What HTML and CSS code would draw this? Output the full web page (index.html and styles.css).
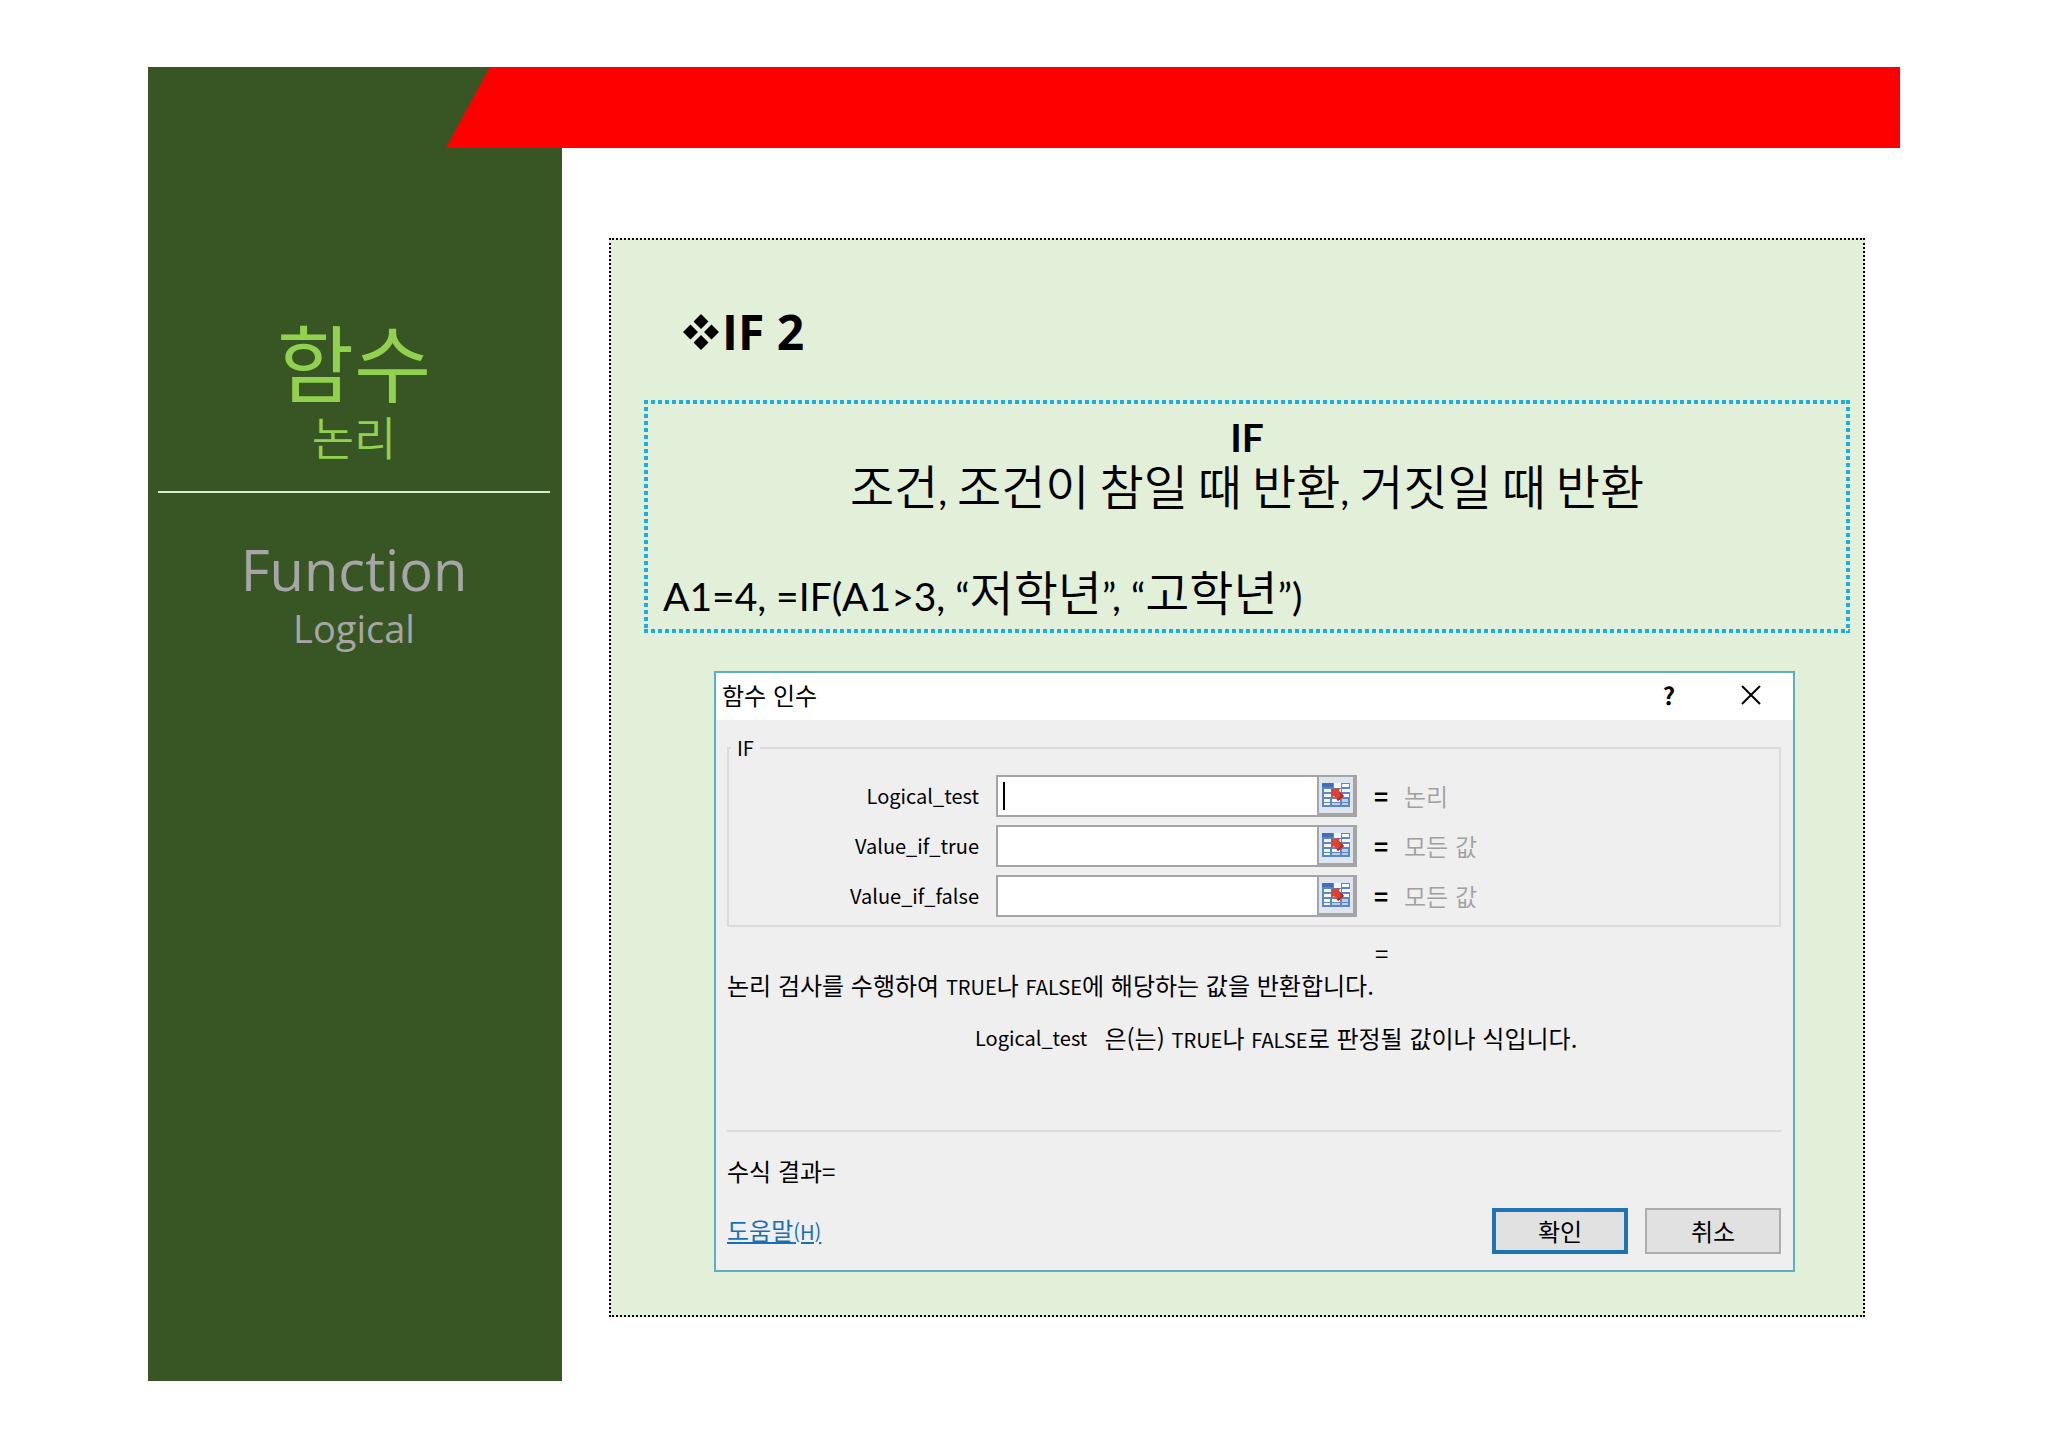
FILE: index.html
```html
<!DOCTYPE html>
<html lang="ko">
<head>
  <meta charset="utf-8">
  <title>함수 - 논리 - IF 2</title>
  <link rel="stylesheet" href="styles.css">
</head>
<body>
<svg class="sprite" width="0" height="0" aria-hidden="true">
  <symbol id="icon-range" viewBox="0 0 28 24">
    <rect x="0" y="0" width="28" height="24" fill="#5d86c2"/>
    <rect x="0" y="0" width="11" height="4" fill="#3f6fb5"/>
    <g fill="#f4f9ff">
      <rect x="12" y="0" width="7" height="5"/>
      <rect x="20" y="1" width="7" height="3"/>
      <rect x="2" y="6" width="7" height="3"/>
      <rect x="10" y="6" width="9" height="3"/>
      <rect x="20" y="6" width="8" height="3"/>
      <rect x="2" y="11" width="7" height="3"/>
      <rect x="10" y="11" width="9" height="3"/>
      <rect x="21" y="11" width="6" height="3"/>
      <rect x="2" y="16" width="6" height="3"/>
      <rect x="10" y="16" width="8" height="3"/>
      <rect x="2" y="20" width="6" height="2"/>
    </g>
    <g fill="#b9cdf0">
      <rect x="20" y="16" width="6" height="3"/>
      <rect x="10" y="20" width="8" height="2"/>
      <rect x="20" y="20" width="6" height="2"/>
    </g>
    <path d="M9 6 L18 5 L17 8 L22 13 L16 18 L12 13 L9 15 Z" fill="#dc4332"/>
    <path d="M17 8 L22 13 L16 18 L15 16 L19 13 Z" fill="#b02a20"/>
  </symbol>
</svg>

<div class="slide">
  <aside class="sidebar">
    <h1 class="title-ko">함수</h1>
    <p class="subtitle-ko">논리</p>
    <hr class="sidebar-line">
    <p class="title-en">Function</p>
    <p class="subtitle-en">Logical</p>
  </aside>
  <div class="ribbon"></div>

  <main class="content">
    <section class="panel">
      <h2 class="panel-title">
        <svg class="bullet" viewBox="0 0 36 36" aria-hidden="true">
          <path d="M18 0 L25.500 7.500 L18 15 L10.500 7.500 Z M7.500 10.500 L15 18 L7.500 25.500 L0 18 Z M28.500 10.500 L36 18 L28.500 25.500 L21 18 Z M18 21 L25.500 28.500 L18 36 L10.500 28.500 Z"/>
        </svg>
        <span>IF 2</span>
      </h2>

      <div class="syntax">
        <p class="syntax-name">IF</p>
        <p class="syntax-args"><span class="ko">조건</span>, <span class="ko">조건이</span> <span class="ko">참일</span> <span class="ko">때</span> <span class="ko">반환</span>, <span class="ko">거짓일</span> <span class="ko">때</span> <span class="ko">반환</span></p>
        <p class="syntax-example">A1=4, =IF(A1&gt;3, “<span class="ko">저학년</span>”, “<span class="ko">고학년</span>”)</p>
      </div>

      <form class="dialog">
        <header class="dialog-bar">
          <span class="dialog-title">함수 인수</span>
          <button type="button" class="bar-btn">?</button>
          <button type="button" class="bar-btn" aria-label="닫기">
            <svg class="close-icon" viewBox="0 0 20 20"><path d="M1 1 L19 19 M19 1 L1 19"/></svg>
          </button>
        </header>
        <div class="dialog-body">
          <fieldset class="args">
            <legend class="en">IF</legend>
            <div class="arg">
              <label class="en" for="logical-test">Logical_test</label>
              <div class="field field-active">
                <input type="text" id="logical-test">
                <button type="button" class="range-btn" aria-label="범위 선택"><svg class="range-icon"><use href="#icon-range"/></svg></button>
              </div>
              <span class="equals">=</span>
              <span class="hint">논리</span>
            </div>
            <div class="arg">
              <label class="en" for="value-true">Value_if_true</label>
              <div class="field">
                <input type="text" id="value-true">
                <button type="button" class="range-btn" aria-label="범위 선택"><svg class="range-icon"><use href="#icon-range"/></svg></button>
              </div>
              <span class="equals">=</span>
              <span class="hint">모든 값</span>
            </div>
            <div class="arg">
              <label class="en" for="value-false">Value_if_false</label>
              <div class="field">
                <input type="text" id="value-false">
                <button type="button" class="range-btn" aria-label="범위 선택"><svg class="range-icon"><use href="#icon-range"/></svg></button>
              </div>
              <span class="equals">=</span>
              <span class="hint">모든 값</span>
            </div>
          </fieldset>
          <p class="result-equals">=</p>
          <p class="description">논리 검사를 수행하여 <span class="en">TRUE</span>나 <span class="en">FALSE</span>에 해당하는 값을 반환합니다.</p>
          <p class="arg-help"><span class="en">Logical_test</span><span>은(는) <span class="en">TRUE</span>나 <span class="en">FALSE</span>로 판정될 값이나 식입니다.</span></p>
          <p class="formula-result">수식 결과=</p>
          <footer class="dialog-footer">
            <a class="help" href="#">도움말<span class="en">(H)</span></a>
            <button type="submit" class="btn btn-default">확인</button>
            <button type="button" class="btn">취소</button>
          </footer>
        </div>
      </form>
    </section>
  </main>
</div>
</body>
</html>
```

FILE: styles.css
```css
* {
  box-sizing: border-box;
}
body {
  margin: 0;
  padding: 67px 148px;
  background: #fff;
  color: #000;
  font-family: "Noto Sans CJK KR", sans-serif;
}
h1, h2, p {
  margin: 0;
  font-weight: normal;
}
.sprite {
  position: absolute;
}

.slide {
  display: flex;
  position: relative;
}
.ribbon {
  position: absolute;
  top: 0;
  left: 17%;
  right: 0;
  height: 81px;
  background: #ff0000;
  clip-path: polygon(44px 0, 100% 0, 100% 100%, 0 100%);
}

/* sidebar */
.sidebar {
  flex: 0 0 414px;
  padding: 244px 12px 0 10px;
  background: #385623;
  text-align: center;
  font-family: "Open Sans", "Noto Sans CJK KR", sans-serif;
}
.title-ko, .subtitle-ko {
  color: #92d050;
  font-family: "Noto Sans CJK KR", sans-serif;
}
.title-ko {
  font-size: 84px;
  line-height: 98px;
}
.subtitle-ko {
  font-size: 46px;
  font-weight: 350;
  line-height: 52px;
}
.sidebar-line {
  height: 2px;
  margin: 30px 0 40px;
  border: 0;
  background: #d5ecc8;
}
.title-en, .subtitle-en {
  color: #a6a6a6;
}
.title-en {
  font-size: 56px;
  line-height: 72px;
}
.subtitle-en {
  font-size: 38px;
  line-height: 46px;
}

/* panel */
.content {
  flex: 1;
  min-width: 0;
  padding: 171px 35px 64px 47px;
}
.panel {
  padding: 60px 13px 43px 33px;
  border: 2px dotted #000;
  background: #e2efd9;
}
.panel-title {
  display: flex;
  align-items: center;
  gap: 3px;
  padding-left: 39px;
  font-family: "Open Sans", sans-serif;
  font-size: 48px;
  font-weight: bold;
  line-height: 64px;
}
.bullet {
  width: 36px;
  height: 36px;
}
/* square dots on all four sides */
.syntax {
  --dots: #1cade4 0 4px, transparent 4px 7px;
  margin-top: 36px;
  padding: 11px 19px 10px;
  background:
    repeating-linear-gradient(90deg, var(--dots)) top / 100% 4px no-repeat,
    repeating-linear-gradient(90deg, var(--dots)) bottom / 100% 4px no-repeat,
    repeating-linear-gradient(var(--dots)) left / 4px 100% no-repeat,
    repeating-linear-gradient(var(--dots)) right / 4px 100% no-repeat;
  font-family: Lato, "Noto Sans CJK KR", sans-serif;
  font-size: 39px;
  line-height: 53px;
}
.syntax .ko {
  font-family: "Noto Sans CJK KR", sans-serif;
  font-size: 48px;
  font-weight: 350;
  line-height: 0;
}
.syntax-name, .syntax-args {
  text-align: center;
}
.syntax-name {
  font-weight: bold;
}
.syntax-example {
  margin-top: 53px;
}

/* dialog */
.dialog {
  margin: 38px 55px 0 70px;
  border: 2px solid #5bb0c4;
  background: #f0eff0;
  font-size: 24px;
  line-height: 32px;
}
.dialog .en {
  font-size: 20px;
}
.dialog-bar {
  display: flex;
  align-items: center;
  height: 47px;
  padding: 0 24px 4px 6px;
  background: #fff;
}
.dialog-title {
  flex: 1;
}
.dialog button, .dialog input {
  font-family: inherit;
  font-size: inherit;
  line-height: inherit;
}
.bar-btn {
  display: flex;
  align-items: center;
  justify-content: center;
  width: 36px;
  height: 36px;
  margin-left: 46px;
  padding: 0;
  border: 0;
  background: none;
}
.dialog .bar-btn {
  font-weight: bold;
}
.close-icon {
  width: 20px;
  height: 20px;
  fill: none;
  stroke: #000;
  stroke-width: 2;
}
.dialog-body {
  padding: 12px 12px 16px 11px;
}
.args {
  display: grid;
  gap: 8px;
  margin: 0;
  padding: 11px 0 8px;
  border: 2px solid #dcdadc;
}
.args legend {
  margin-left: 2px;
  padding: 0 6px;
}
.arg {
  display: grid;
  grid-template-columns: 250px 361px 30px 1fr;
  column-gap: 17px;
  align-items: center;
}
.arg label {
  text-align: right;
}
.field {
  display: flex;
  position: relative;
  height: 42px;
  border: 2px solid #a5a5a8;
  background: #fff;
}
.field input {
  flex: 1;
  min-width: 0;
  padding: 0 6px;
  border: 0;
  outline: 0;
  background: none;
}
/* text cursor of the focused field */
.field-active::before {
  content: "";
  position: absolute;
  top: 5px;
  left: 5px;
  width: 2px;
  height: 28px;
  background: #000;
}
.range-btn {
  width: 38px;
  padding: 0;
  border: 2px solid #a5a5a8;
  border-width: 0 2px 2px;
  background: #dfe5ee;
}
.range-icon {
  display: block;
  width: 28px;
  height: 24px;
  margin: 0 auto;
}
.equals {
  font-weight: bold;
}
.hint {
  margin-left: -17px;
  color: #a0a0a0;
  font-weight: 350;
}
.result-equals {
  margin: 10px 0 0 648px;
}
.arg-help {
  display: flex;
  gap: 17px;
  margin: 19px 0 0 248px;
}
.formula-result {
  margin-top: 74px;
  padding-top: 23px;
  border-top: 2px solid #dcdadc;
}
.dialog-footer {
  display: flex;
  align-items: center;
  margin-top: 21px;
}
.help {
  flex: 1;
  color: #1a6fb8;
}
.btn {
  width: 136px;
  height: 46px;
  margin-left: 17px;
  padding: 0;
  border: 2px solid #adadad;
  background: #e1e1e1;
}
.btn-default {
  border: 4px solid #1f74b3;
}
```
